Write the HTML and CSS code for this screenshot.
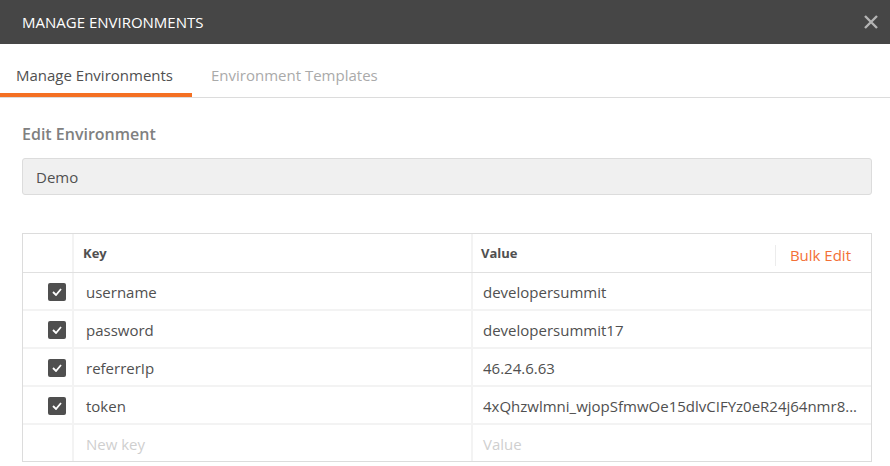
FILE: index.html
```html
<!DOCTYPE html>
<html>
<head>
<meta charset="utf-8">
<link rel="stylesheet" href="styles.css">
</head>
<body>
<div class="modal">
  <div class="header">
    <div class="title">MANAGE ENVIRONMENTS</div>
    <svg class="close" width="14" height="14" viewBox="0 0 14 14"><path d="M1 1L13 13M13 1L1 13" stroke="#b4b4b4" stroke-width="2.4" fill="none"/></svg>
  </div>
  <div class="tabs">
    <div class="tab active">Manage Environments</div>
    <div class="tab">Environment Templates</div>
  </div>
  <div class="content">
    <div class="label">Edit Environment</div>
    <div class="input">Demo</div>
    <div class="table">
      <div class="row head">
        <div class="cell check"></div>
        <div class="cell key">Key</div>
        <div class="cell value">Value<span class="bulk">Bulk Edit</span></div>
      </div>
      <div class="row">
        <div class="cell check"><span class="cb"><svg width="10" height="8" viewBox="0 0 10 8"><path d="M1 4L4 7L9 1" stroke="#fff" stroke-width="1.8" fill="none"/></svg></span></div>
        <div class="cell key">username</div>
        <div class="cell value">developersummit</div>
      </div>
      <div class="row">
        <div class="cell check"><span class="cb"><svg width="10" height="8" viewBox="0 0 10 8"><path d="M1 4L4 7L9 1" stroke="#fff" stroke-width="1.8" fill="none"/></svg></span></div>
        <div class="cell key">password</div>
        <div class="cell value">developersummit17</div>
      </div>
      <div class="row">
        <div class="cell check"><span class="cb"><svg width="10" height="8" viewBox="0 0 10 8"><path d="M1 4L4 7L9 1" stroke="#fff" stroke-width="1.8" fill="none"/></svg></span></div>
        <div class="cell key">referrerIp</div>
        <div class="cell value">46.24.6.63</div>
      </div>
      <div class="row">
        <div class="cell check"><span class="cb"><svg width="10" height="8" viewBox="0 0 10 8"><path d="M1 4L4 7L9 1" stroke="#fff" stroke-width="1.8" fill="none"/></svg></span></div>
        <div class="cell key">token</div>
        <div class="cell value">4xQhzwlmni_wjopSfmwOe15dlvCIFYz0eR24j64nmr8...</div>
      </div>
      <div class="row last">
        <div class="cell check"></div>
        <div class="cell key placeholder">New key</div>
        <div class="cell value placeholder">Value</div>
      </div>
    </div>
  </div>
</div>
</body>
</html>
```

FILE: styles.css
```css
html, body {
  margin: 0;
  padding: 0;
  background: #fff;
}
body {
  font-family: "Open Sans", "Liberation Sans", sans-serif;
  color: #505050;
  width: 890px;
  height: 466px;
  overflow: hidden;
}
.header {
  height: 44px;
  background: #464646;
  display: flex;
  align-items: center;
  justify-content: space-between;
  padding: 0 12px 0 22px;
}
.title {
  color: #fff;
  font-size: 15px;
}
.close {
  display: block;
  margin-top: -1px;
}
.tabs {
  display: flex;
  height: 53px;
  border-bottom: 1px solid #dcdcdc;
}
.tab {
  font-size: 15px;
  color: #aaaaaa;
  padding: 8px 19px 0 19px;
  display: flex;
  align-items: center;
  box-sizing: border-box;
}
.tab.active {
  color: #505050;
  padding-left: 16px;
  border-bottom: 4px solid #f47023;
  padding-top: 12px;
}
.content {
  padding: 0 18px 0 22px;
}
.label {
  font-size: 16px;
  font-weight: 600;
  color: #808080;
  margin-top: 24px;
  line-height: 24px;
}
.input {
  margin-top: 12px;
  height: 37px;
  box-sizing: border-box;
  background: #f0f0f0;
  border: 1px solid #dcdcdc;
  border-radius: 3px;
  font-size: 15px;
  padding: 0 13px;
  display: flex;
  align-items: center;
  color: #505050;
}
.table {
  margin-top: 38px;
  border: 1px solid #dcdcdc;
  width: 850px;
  box-sizing: border-box;
}
.row {
  display: grid;
  grid-template-columns: 51px 399px 398px;
  height: 38px;
  border-bottom: 2px solid #f3f3f3;
  box-sizing: border-box;
}
.row.head {
  height: 39px;
  border-bottom: 1px solid #e0e0e0;
}
.row.last {
  border-bottom: none;
  height: 36px;
}
.cell {
  display: flex;
  align-items: center;
  font-size: 15px;
  color: #505050;
  min-width: 0;
  white-space: nowrap;
  padding-top: 1px;
}
.cell.check {
  justify-content: flex-end;
  padding-right: 6px;
  border-right: 2px solid #f3f3f3;
}
.cell.key {
  padding-left: 12px;
  border-right: 2px solid #f3f3f3;
}
.cell.value {
  padding-left: 10px;
  padding-right: 8px;
}
.head .cell {
  font-size: 13px;
  font-weight: 700;
  color: #505050;
  padding-top: 0;
}
.head .cell.key {
  padding-left: 9px;
}
.head .cell.value {
  padding-left: 8px;
  justify-content: space-between;
  padding-right: 20px;
}
.bulk {
  font-weight: 400;
  font-size: 15px;
  color: #f37036;
  border-left: 1px solid #ececec;
  padding-left: 14px;
  line-height: 21px;
  margin-top: 4px;
}
.cb {
  width: 18px;
  height: 18px;
  background: #4f4f4f;
  border-radius: 2px;
  display: flex;
  align-items: center;
  justify-content: center;
}
.cb svg {
  display: block;
}
.placeholder {
  color: #cfcfcf;
}
```
